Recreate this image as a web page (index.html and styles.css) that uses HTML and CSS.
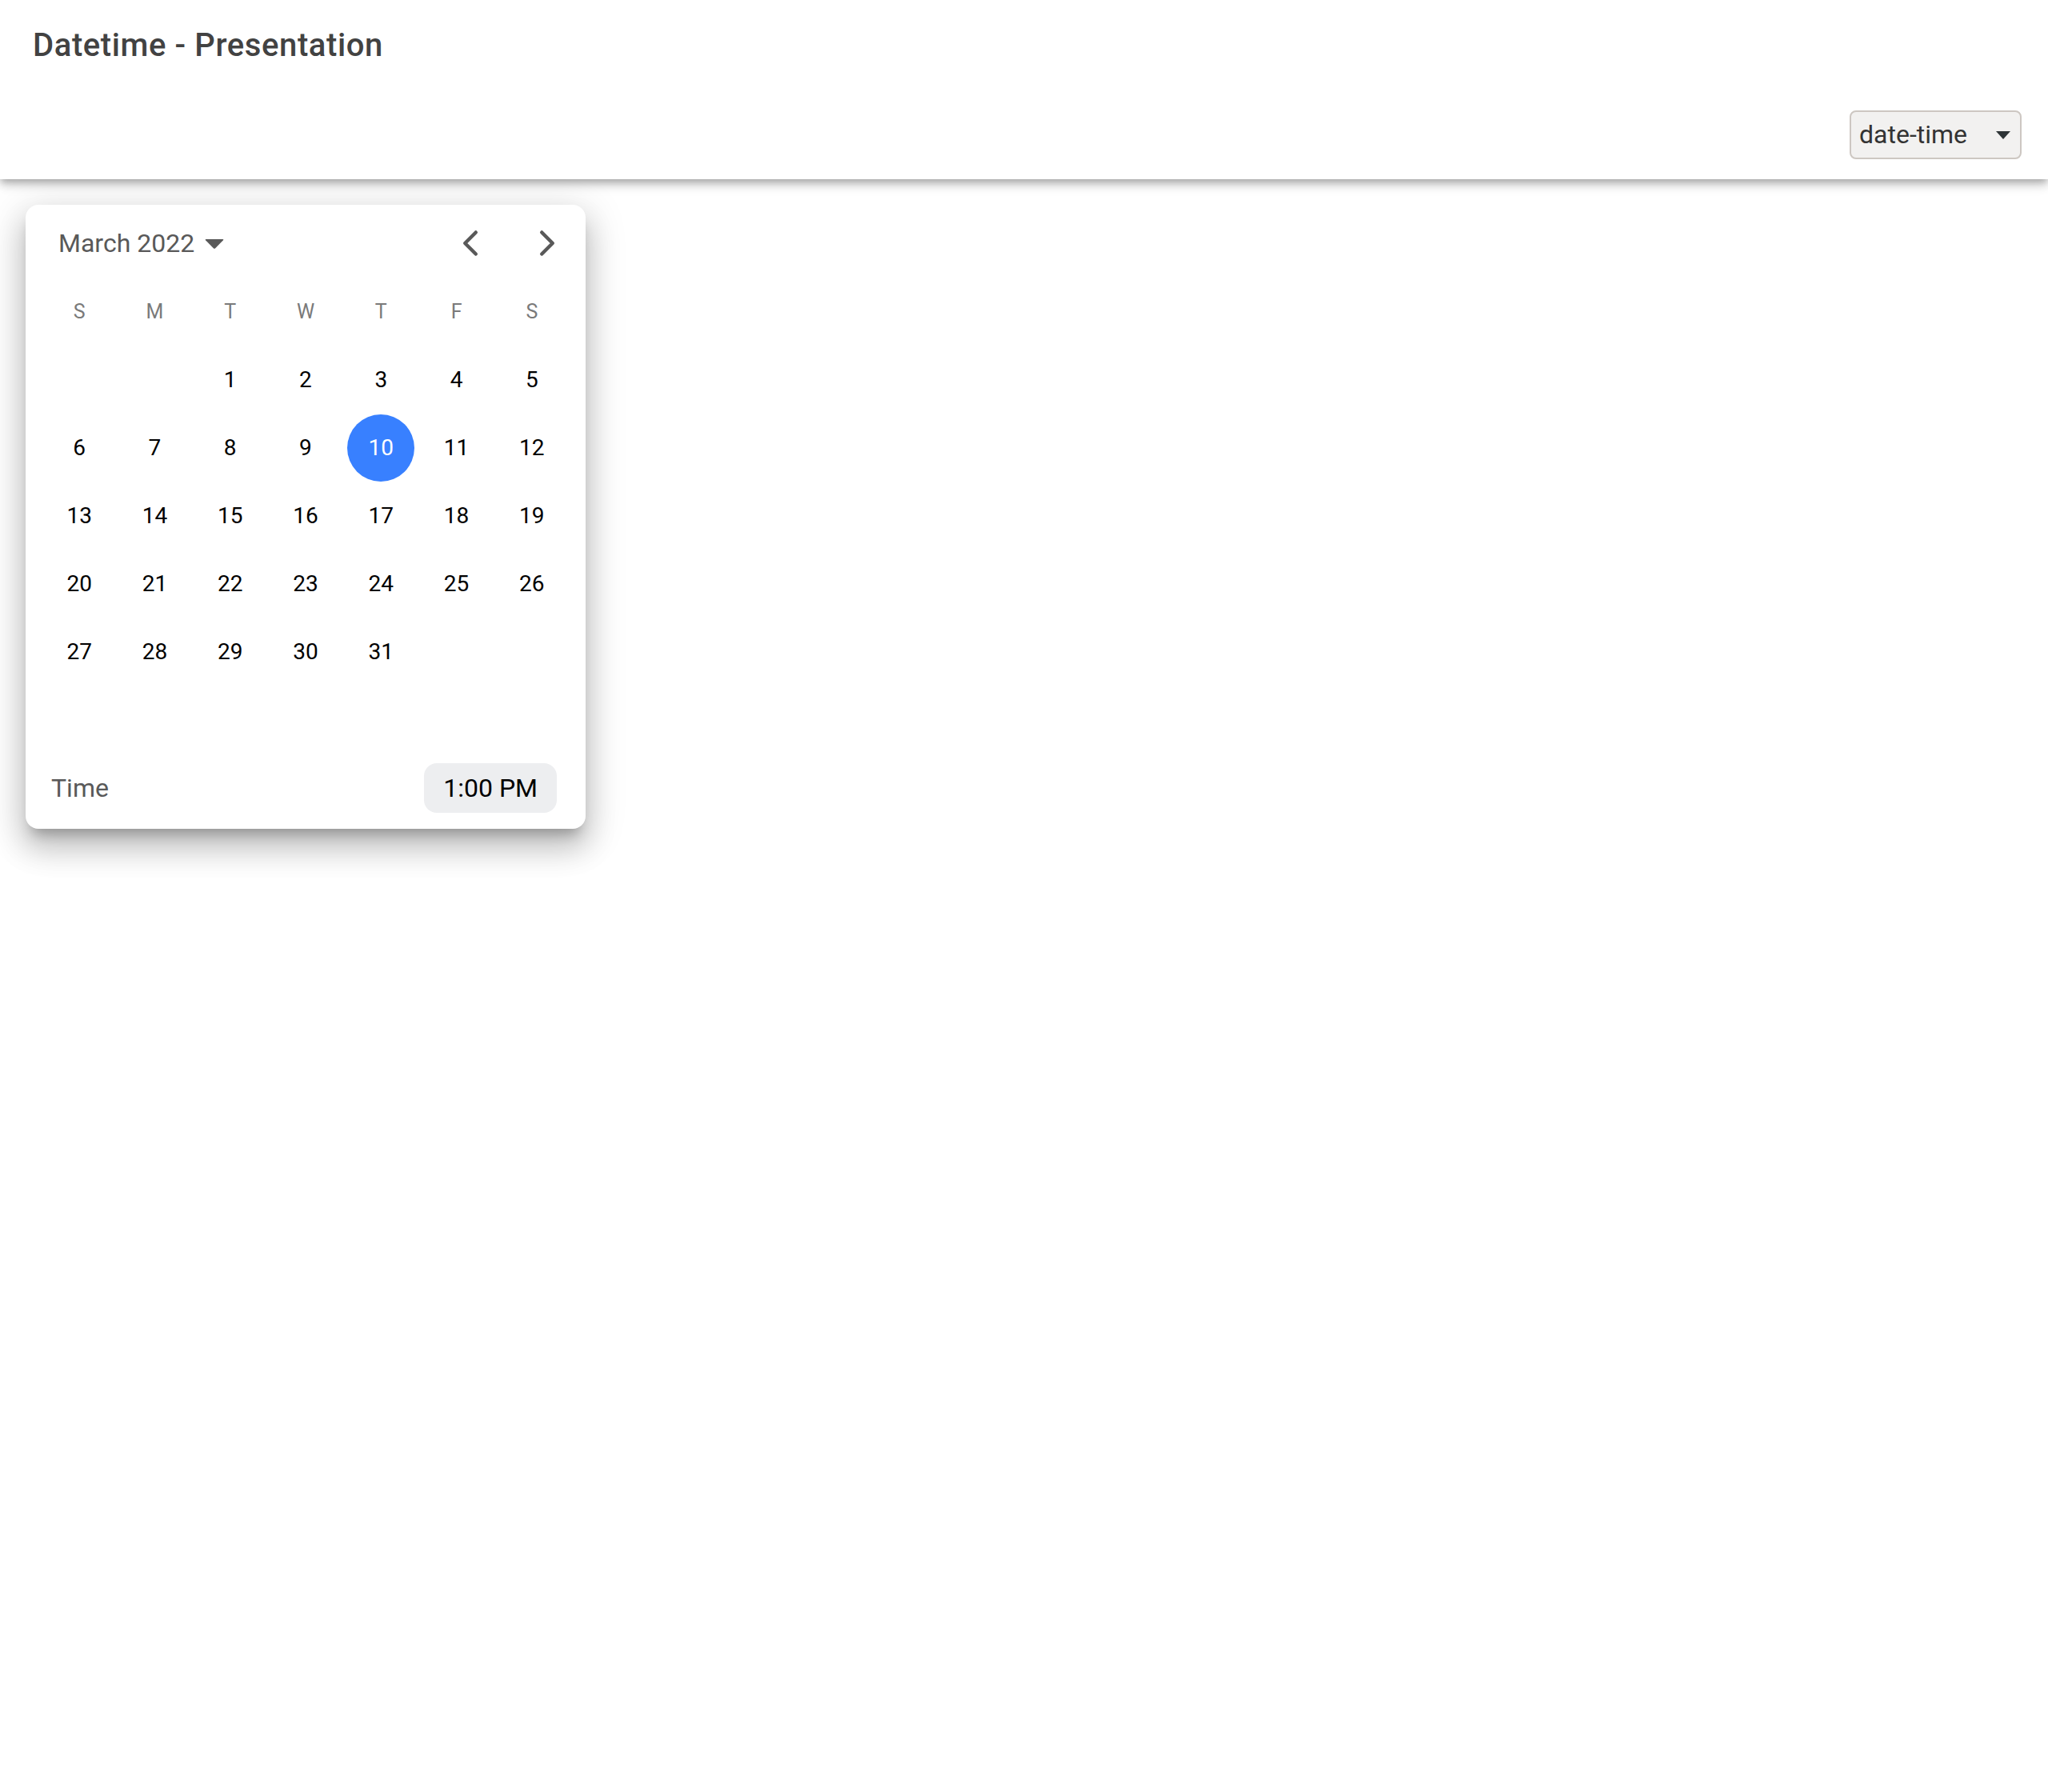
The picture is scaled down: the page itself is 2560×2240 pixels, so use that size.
FILE: index.html
```html
<!DOCTYPE html>
<html lang="en">
<head>
<meta charset="utf-8">
<title>Datetime - Presentation</title>
<link rel="stylesheet" href="styles.css">
</head>
<body>
<header class="header">
  <div class="toolbar">
    <h1 class="title">Datetime - Presentation</h1>
  </div>
  <div class="toolbar toolbar-end">
    <div class="select-wrap">
      <select class="select">
        <option>date-time</option>
      </select>
      <svg class="select-arrow" viewBox="0 0 18 10" width="18" height="10"><polygon points="0,0 18,0 9,10" fill="#2e3436"/></svg>
    </div>
  </div>
</header>
<main class="content">
  <div class="datetime">
    <div class="cal-header">
      <div class="month-year">
        <span class="month-label">March 2022</span>
        <svg class="caret" viewBox="0 0 24 12" width="24" height="12"><path d="M1.5 0 H22.5 Q24 0 23 1.2 L13.2 11.2 Q12 12.4 10.8 11.2 L1 1.2 Q0 0 1.5 0 Z" fill="#595959"/></svg>
      </div>
      <div class="nav">
        <button class="nav-btn" aria-label="Previous month"><svg viewBox="0 0 512 512" width="48" height="48"><path d="M328 112L184 256l144 144" fill="none" stroke="#595959" stroke-width="48" stroke-linecap="round" stroke-linejoin="round"/></svg></button>
        <button class="nav-btn" aria-label="Next month"><svg viewBox="0 0 512 512" width="48" height="48"><path d="M184 112l144 144-144 144" fill="none" stroke="#595959" stroke-width="48" stroke-linecap="round" stroke-linejoin="round"/></svg></button>
      </div>
    </div>
    <div class="weekdays">
      <div class="wd">S</div><div class="wd">M</div><div class="wd">T</div><div class="wd">W</div><div class="wd">T</div><div class="wd">F</div><div class="wd">S</div>
    </div>
    <div class="days">
      <div class="day"></div><div class="day"></div>
      <div class="day"><span>1</span></div><div class="day"><span>2</span></div><div class="day"><span>3</span></div><div class="day"><span>4</span></div><div class="day"><span>5</span></div>
      <div class="day"><span>6</span></div><div class="day"><span>7</span></div><div class="day"><span>8</span></div><div class="day"><span>9</span></div><div class="day"><span class="selected">10</span></div><div class="day"><span>11</span></div><div class="day"><span>12</span></div>
      <div class="day"><span>13</span></div><div class="day"><span>14</span></div><div class="day"><span>15</span></div><div class="day"><span>16</span></div><div class="day"><span>17</span></div><div class="day"><span>18</span></div><div class="day"><span>19</span></div>
      <div class="day"><span>20</span></div><div class="day"><span>21</span></div><div class="day"><span>22</span></div><div class="day"><span>23</span></div><div class="day"><span>24</span></div><div class="day"><span>25</span></div><div class="day"><span>26</span></div>
      <div class="day"><span>27</span></div><div class="day"><span>28</span></div><div class="day"><span>29</span></div><div class="day"><span>30</span></div><div class="day"><span>31</span></div><div class="day"></div><div class="day"></div>
      <div class="day"></div><div class="day"></div><div class="day"></div><div class="day"></div><div class="day"></div><div class="day"></div><div class="day"></div>
    </div>
    <div class="time-row">
      <span class="time-label">Time</span>
      <button class="time-btn">1:00 PM</button>
    </div>
  </div>
</main>
</body>
</html>
```

FILE: styles.css
```css
html, body {
  margin: 0;
  padding: 0;
  background: #ffffff;
  font-family: Roboto, "Noto Sans", "Liberation Sans", sans-serif;
}

body {
  min-height: 100vh;
}

.header {
  position: relative;
  z-index: 2;
  background: #ffffff;
  box-shadow: 0 4px 8px -2px rgba(0, 0, 0, 0.2), 0 8px 10px 0 rgba(0, 0, 0, 0.14), 0 2px 20px 0 rgba(0, 0, 0, 0.12);
}

.toolbar {
  height: 112px;
  display: flex;
  align-items: center;
  box-sizing: border-box;
}

.toolbar-end {
  justify-content: flex-end;
  padding-right: 33px;
}

.title {
  margin: 0;
  padding-left: 41px;
  font-size: 40px;
  font-weight: 500;
  letter-spacing: 0.6px;
  color: #424242;
}

.select-wrap {
  position: relative;
  width: 215px;
  height: 61px;
}

.select {
  appearance: none;
  -webkit-appearance: none;
  width: 100%;
  height: 100%;
  box-sizing: border-box;
  margin: 0;
  padding: 0 0 0 10px;
  border: 2px solid #cdc7c2;
  border-radius: 8px;
  background: #f2f1f0;
  color: #333333;
  font-family: Roboto, "Noto Sans", sans-serif;
  font-size: 32px;
}

.select-arrow {
  position: absolute;
  right: 14px;
  top: 26px;
  pointer-events: none;
}

.content {
  padding: 32px 32px 200px;
}

.datetime {
  width: 700px;
  background: #ffffff;
  border-radius: 16px;
  box-shadow: 0 14px 16px -8px rgba(0, 0, 0, 0.25), 0 24px 36px 3px rgba(0, 0, 0, 0.16), 0 10px 48px 8px rgba(0, 0, 0, 0.12);
}

.cal-header {
  height: 96px;
  display: flex;
  align-items: center;
  justify-content: space-between;
  padding: 0 16px 0 41px;
}

.month-year {
  display: flex;
  align-items: center;
  gap: 13px;
  color: #595959;
  font-size: 32px;
}

.caret {
  display: block;
  margin-top: 2px;
}

.nav {
  display: flex;
  gap: 32px;
}

.nav-btn {
  width: 64px;
  height: 64px;
  padding: 0;
  border: none;
  background: transparent;
  display: flex;
  align-items: center;
  justify-content: center;
}

.nav-btn svg {
  display: block;
}

.weekdays {
  display: grid;
  grid-template-columns: repeat(7, 1fr);
  padding: 0 20px;
  height: 74px;
  margin-bottom: 6px;
  align-items: center;
}

.wd {
  text-align: center;
  font-size: 25px;
  color: #7a7a7a;
}

.days {
  display: grid;
  grid-template-columns: repeat(7, 1fr);
  grid-auto-rows: 85px;
  padding: 0 20px;
}

.day {
  display: flex;
  align-items: center;
  justify-content: center;
  font-size: 28px;
  color: #000000;
}

.day span {
  width: 84px;
  height: 84px;
  border-radius: 50%;
  display: flex;
  align-items: center;
  justify-content: center;
}

.day .selected {
  background: #3880ff;
  color: #ffffff;
}

.time-row {
  display: flex;
  align-items: center;
  justify-content: space-between;
  padding: 12px 36px 20px 32px;
}

.time-label {
  font-size: 32px;
  color: #595959;
}

.time-btn {
  height: 62px;
  padding: 0 24px;
  border: none;
  border-radius: 16px;
  background: #edeef0;
  color: #000000;
  font-family: Roboto, "Noto Sans", sans-serif;
  font-size: 32px;
}
```
